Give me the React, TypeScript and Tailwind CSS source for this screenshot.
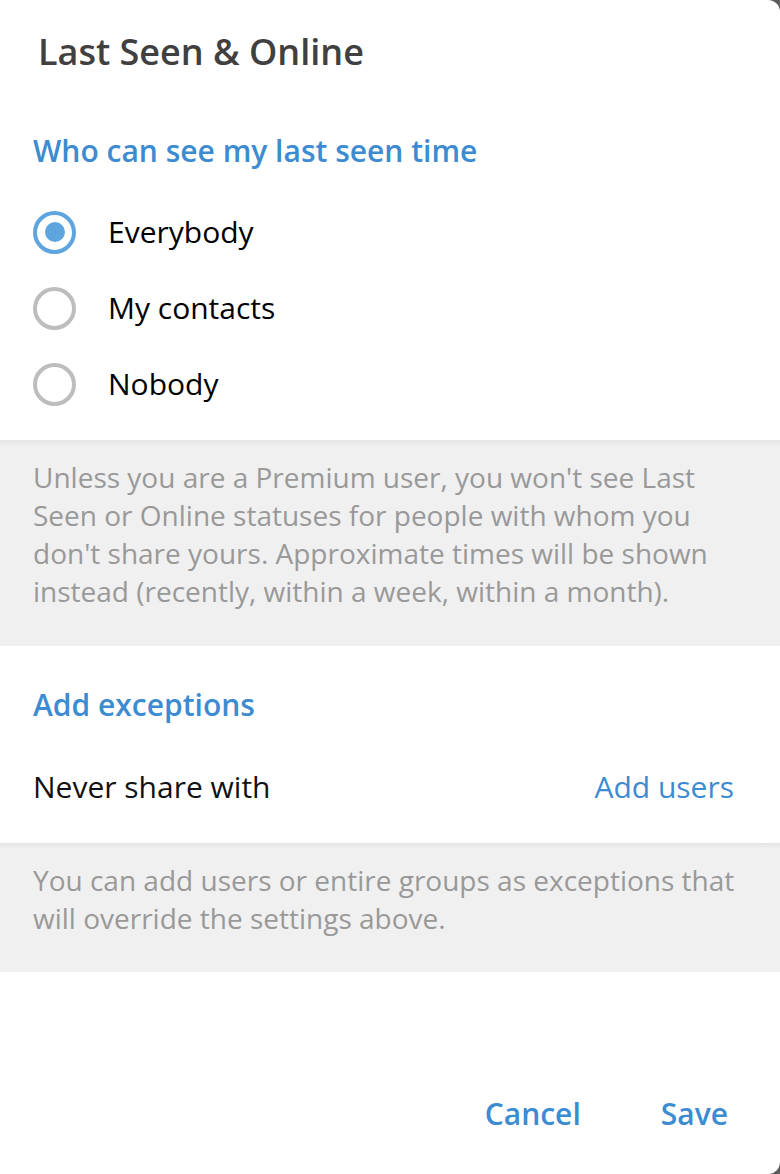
import React from 'react';

const options = ['Everybody', 'My contacts', 'Nobody'];

function Radio({ checked }: { checked: boolean }) {
  return (
    <span
      className={`flex h-[43px] w-[43px] shrink-0 items-center justify-center rounded-full border-[4px] ${
        checked ? 'border-[#5ea5e0]' : 'border-[#bdbdbd]'
      }`}
    >
      {checked && <span className="h-[20px] w-[20px] rounded-full bg-[#5ea5e0]" />}
    </span>
  );
}

export default function App() {
  return (
    <div className="min-h-[1174px] w-[780px] bg-[#5c5c5c] font-['Open_Sans',sans-serif]">
      <div className="flex h-[1174px] w-[780px] flex-col overflow-hidden rounded-r-[12px] bg-white">
        {/* title */}
        <div className="px-[38px] pt-[30px] pb-[57px] text-[36px] font-semibold leading-[44px] text-[#404040]">
          Last Seen &amp; Online
        </div>

        {/* visibility */}
        <div className="px-[33px] text-[30px] font-semibold leading-[40px] text-[#3d8bd0]">
          Who can see my last seen time
        </div>
        <div className="flex flex-col pt-[23px] pb-[18px]">
          {options.map((o, i) => (
            <div key={o} className="flex h-[76px] items-center gap-[32px] px-[33px]">
              <Radio checked={i === 0} />
              <span className="text-[30px] leading-[40px] text-black">{o}</span>
            </div>
          ))}
        </div>

        <div className="bg-[#f0f0f0] bg-gradient-to-b from-[#e4e4e4] to-[#f0f0f0] bg-[length:100%_6px] bg-no-repeat px-[33px] pt-[18px] pb-[36px] text-[28px] leading-[38px] text-[#999999]">
          Unless you are a Premium user, you won't see Last Seen or Online statuses for people with whom you
          don't share yours. Approximate times will be shown instead (recently, within a week, within a month).
        </div>

        {/* exceptions */}
        <div className="px-[33px] pt-[39px] text-[30px] font-semibold leading-[40px] text-[#3d8bd0]">
          Add exceptions
        </div>
        <div className="flex items-center justify-between pt-[21px] pr-[46px] pl-[33px] pb-[15px]">
          <span className="text-[30px] leading-[82px] text-[#111]">Never share with</span>
          <span className="text-[30px] leading-[82px] text-[#3d8bd0]">Add users</span>
        </div>

        <div className="bg-[#f0f0f0] bg-gradient-to-b from-[#e4e4e4] to-[#f0f0f0] bg-[length:100%_6px] bg-no-repeat px-[33px] pt-[18px] pb-[35px] text-[28px] leading-[38px] text-[#999999]">
          You can add users or entire groups as exceptions that will override the settings above.
        </div>

        <div className="flex flex-1 items-end justify-end gap-[80px] pr-[52px] pb-[40px]">
          <button className="text-[30px] font-semibold leading-[40px] text-[#3d8bd0]">Cancel</button>
          <button className="text-[30px] font-semibold leading-[40px] text-[#3d8bd0]">Save</button>
        </div>
      </div>
    </div>
  );
}
